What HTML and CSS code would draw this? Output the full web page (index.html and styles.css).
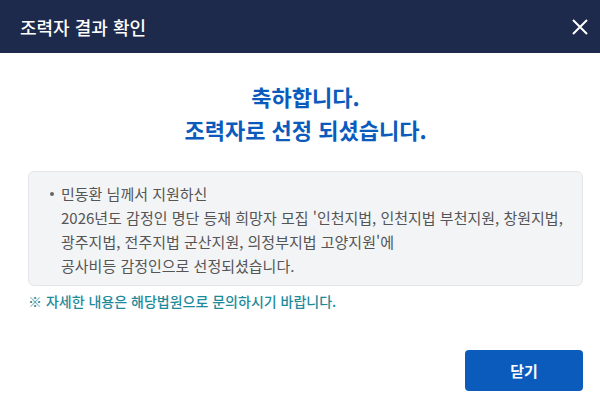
FILE: index.html
```html
<!DOCTYPE html>
<html lang="ko">
<head>
    <meta charset="UTF-8">
    <meta name="viewport" content="width=device-width, initial-scale=1.0">
    <title>조력자 결과 확인</title>
    <link rel="stylesheet" href="styles.css">
</head>
<body>
    <div class="modal">
        <div class="modal-header">
            <h1 class="modal-title">조력자 결과 확인</h1>
            <button class="close-btn" type="button" aria-label="닫기">
                <svg width="18" height="18" viewBox="0 0 18 18">
                    <path d="M2 2L16 16M16 2L2 16" stroke="#fff" stroke-width="2" fill="none"/>
                </svg>
            </button>
        </div>

        <div class="modal-body">
            <p class="congrats">축하합니다.<br>조력자로 선정 되셨습니다.</p>

            <div class="info-box">
                <ul>
                    <li>민동환 님께서 지원하신<br>2026년도 감정인 명단 등재 희망자 모집 '인천지법, 인천지법 부천지원, 창원지법, 광주지법, 전주지법 군산지원, 의정부지법 고양지원'에<br>공사비등 감정인으로 선정되셨습니다.</li>
                </ul>
            </div>

            <p class="notice">※ 자세한 내용은 해당법원으로 문의하시기 바랍니다.</p>
        </div>

        <div class="modal-footer">
            <button class="confirm-btn" type="button">닫기</button>
        </div>
    </div>
</body>
</html>
```

FILE: styles.css
```css
body {
    margin: 0;
    font-family: "Noto Sans CJK KR", "Noto Sans", sans-serif;
    background: #fff;
}
.modal {
    width: 600px;
    height: 412px;
    display: flex;
    flex-direction: column;
}
.modal-header {
    height: 53px;
    background: #1e2a4b;
    display: flex;
    align-items: center;
    justify-content: space-between;
    padding: 0 8px 0 20px;
}
.modal-title {
    margin: 0;
    color: #fff;
    font-size: 18px;
    font-weight: 500;
}
.close-btn {
    background: none;
    border: none;
    padding: 0;
    width: 24px;
    height: 24px;
    display: flex;
    align-items: center;
    justify-content: center;
    cursor: pointer;
}
.modal-body {
    padding: 0 17px 0 28px;
}
.congrats {
    margin: 27px 0 0;
    text-align: center;
    color: #0b5bbd;
    font-size: 22px;
    font-weight: 700;
    line-height: 33px;
}
.info-box {
    margin-top: 25px;
    background: #f3f4f6;
    border: 1px solid #e3e5e8;
    border-radius: 6px;
    padding: 10px 10px 7px 20px;
}
.info-box ul {
    margin: 0;
    padding-left: 12px;
    list-style: none;
}
.info-box li {
    position: relative;
    color: #555;
    font-size: 15px;
    line-height: 24px;
    word-break: keep-all;
}
.info-box li::before {
    content: "";
    position: absolute;
    left: -11px;
    top: 10px;
    width: 4px;
    height: 4px;
    border-radius: 50%;
    background: #666;
}
.notice {
    margin: 5px 0 0;
    color: #1e8b9b;
    font-size: 14px;
    font-weight: 500;
    line-height: 20px;
}
.modal-footer {
    margin-top: auto;
    display: flex;
    justify-content: flex-end;
    padding: 0 17px 21px;
}
.confirm-btn {
    width: 118px;
    height: 41px;
    background: #0b5bbd;
    color: #fff;
    border: none;
    border-radius: 4px;
    font-family: inherit;
    font-size: 15px;
    font-weight: 700;
    cursor: pointer;
}
```
